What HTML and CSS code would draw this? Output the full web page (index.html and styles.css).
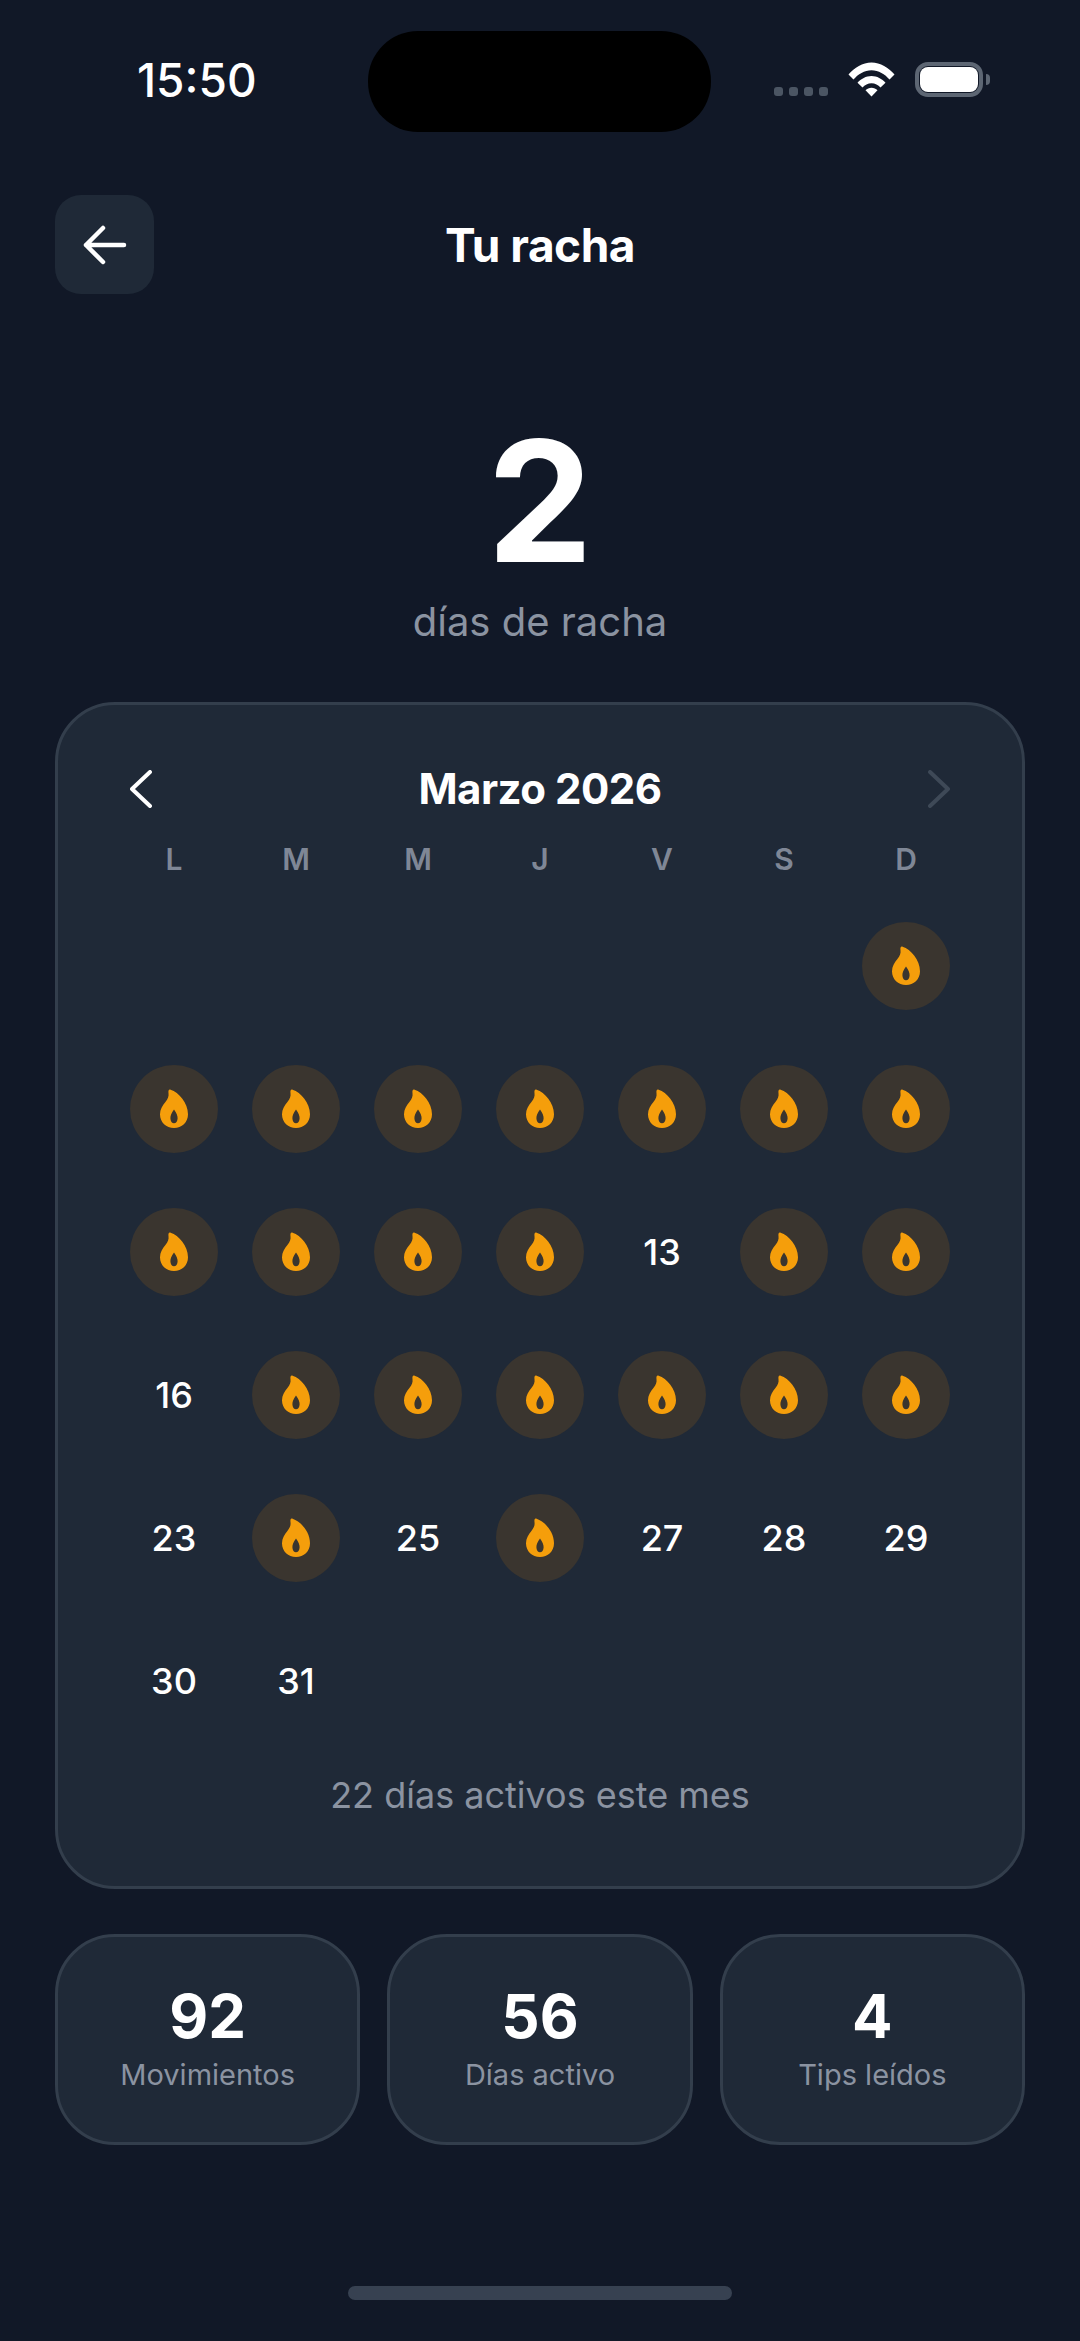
FILE: index.html
```html
<!DOCTYPE html>
<html lang="es">
<head>
  <meta charset="UTF-8" />
  <meta name="viewport" content="width=device-width, initial-scale=1.0"/>
  <title>Tu racha</title>
  <link rel="stylesheet" href="styles.css">
</head>
<body>
  <svg class="defs" width="0" height="0">
    <symbol id="llama" viewBox="0 0 28 39">
      <path fill-rule="evenodd" d="M9.6 0.6C8.4 1 8.3 2.4 8.5 4.2C8.9 7.4 8 9.6 5.4 13C2.4 16.8 0 20.4 0 25.2C0 33.2 6.2 39 14 39C21.800 39 28 33.200 28 25.200C28 13.800 18.800 3.400 10.600 0.700C10.300 0.600 9.900 0.500 9.600 0.600ZM14 20.400C11.400 24 10.400 26.600 10.400 29.200C10.400 32.200 12 34.200 14 34.200C16 34.200 17.600 32.200 17.600 29.200C17.600 26.600 16.600 24 14 20.400Z"/>
    </symbol>
  </svg>

  <div class="status-bar">
    <span class="hora">15:50</span>
    <div class="isla"></div>
    <div class="status-iconos">
      <div class="senal"><i></i><i></i><i></i><i></i></div>
      <svg class="wifi" width="47" height="35" viewBox="0 0 47 35">
        <path d="M0.500 12.500C6.500 5.500 14.500 0.500 23.500 0.500C32.500 0.500 40.500 5.500 46.500 12.500L41.500 17.500C37 12.200 30.500 8.200 23.500 8.200C16.500 8.200 10 12.200 5.500 17.500Z"/>
        <path d="M9.500 20.800C13 16.800 18 14 23.500 14C29 14 34 16.800 37.500 20.800L32.500 25.500C30.300 22.900 27 21.200 23.500 21.200C20 21.200 16.700 22.900 14.500 25.500Z"/>
        <path d="M17.500 28.200C19 26.800 21.200 25.800 23.500 25.800C25.800 25.800 28 26.800 29.500 28.200L23.500 34.500Z"/>
      </svg>
      <div class="bateria"><div class="carga"></div></div>
      <div class="bateria-punta"></div>
    </div>
  </div>

  <header class="cabecera">
    <button class="volver" aria-label="Volver">
      <svg width="44" height="40" viewBox="0 0 44 40" fill="none" stroke="#fff" stroke-width="4.500" stroke-linecap="round" stroke-linejoin="round">
        <path d="M41 20H3M20 3L3 20L20 37"/>
      </svg>
    </button>
    <h1>Tu racha</h1>
  </header>

  <section class="racha">
    <div class="racha-numero">2</div>
    <div class="racha-texto">días de racha</div>
  </section>

  <section class="calendario">
    <div class="mes">
      <svg width="22" height="38" viewBox="0 0 22 38" fill="none" stroke="#fff" stroke-width="4" stroke-linecap="round" stroke-linejoin="round">
        <path d="M20 2L2 19L20 36"/>
      </svg>
      <h2>Marzo 2026</h2>
      <svg width="22" height="38" viewBox="0 0 22 38" fill="none" stroke="#3e4957" stroke-width="4" stroke-linecap="round" stroke-linejoin="round">
        <path d="M2 2L20 19L2 36"/>
      </svg>
    </div>

    <div class="semana">
      <span>L</span><span>M</span><span>M</span><span>J</span><span>V</span><span>S</span><span>D</span>
    </div>

    <div class="dias">
      <div></div><div></div><div></div><div></div><div></div><div></div>
      <div class="dia"><span class="activo"><svg class="llama"><use href="#llama"/></svg></span></div>

      <div class="dia"><span class="activo"><svg class="llama"><use href="#llama"/></svg></span></div>
      <div class="dia"><span class="activo"><svg class="llama"><use href="#llama"/></svg></span></div>
      <div class="dia"><span class="activo"><svg class="llama"><use href="#llama"/></svg></span></div>
      <div class="dia"><span class="activo"><svg class="llama"><use href="#llama"/></svg></span></div>
      <div class="dia"><span class="activo"><svg class="llama"><use href="#llama"/></svg></span></div>
      <div class="dia"><span class="activo"><svg class="llama"><use href="#llama"/></svg></span></div>
      <div class="dia"><span class="activo"><svg class="llama"><use href="#llama"/></svg></span></div>

      <div class="dia"><span class="activo"><svg class="llama"><use href="#llama"/></svg></span></div>
      <div class="dia"><span class="activo"><svg class="llama"><use href="#llama"/></svg></span></div>
      <div class="dia"><span class="activo"><svg class="llama"><use href="#llama"/></svg></span></div>
      <div class="dia"><span class="activo"><svg class="llama"><use href="#llama"/></svg></span></div>
      <div class="dia">13</div>
      <div class="dia"><span class="activo"><svg class="llama"><use href="#llama"/></svg></span></div>
      <div class="dia"><span class="activo"><svg class="llama"><use href="#llama"/></svg></span></div>

      <div class="dia">16</div>
      <div class="dia"><span class="activo"><svg class="llama"><use href="#llama"/></svg></span></div>
      <div class="dia"><span class="activo"><svg class="llama"><use href="#llama"/></svg></span></div>
      <div class="dia"><span class="activo"><svg class="llama"><use href="#llama"/></svg></span></div>
      <div class="dia"><span class="activo"><svg class="llama"><use href="#llama"/></svg></span></div>
      <div class="dia"><span class="activo"><svg class="llama"><use href="#llama"/></svg></span></div>
      <div class="dia"><span class="activo"><svg class="llama"><use href="#llama"/></svg></span></div>

      <div class="dia">23</div>
      <div class="dia"><span class="activo"><svg class="llama"><use href="#llama"/></svg></span></div>
      <div class="dia">25</div>
      <div class="dia"><span class="activo"><svg class="llama"><use href="#llama"/></svg></span></div>
      <div class="dia">27</div>
      <div class="dia">28</div>
      <div class="dia">29</div>

      <div class="dia">30</div>
      <div class="dia">31</div>
    </div>

    <p class="resumen">22 días activos este mes</p>
  </section>

  <section class="stats">
    <div class="stat"><strong>92</strong><span>Movimientos</span></div>
    <div class="stat"><strong>56</strong><span>Días activo</span></div>
    <div class="stat"><strong>4</strong><span>Tips leídos</span></div>
  </section>

  <div class="home-bar"></div>
</body>
</html>
```

FILE: styles.css
```css
* {
  box-sizing: border-box;
}
body {
  margin: 0;
  width: 1080px;
  height: 2341px;
  overflow: hidden;
  background: #111827;
  color: #fff;
  font-family: Inter, "Noto Sans", sans-serif;
  display: flex;
  flex-direction: column;
  align-items: center;
}
.defs {
  position: absolute;
}

/* barra de estado */
.status-bar {
  width: 100%;
  height: 195px;
  padding: 31px 90px 0 137px;
  display: flex;
  align-items: flex-start;
}
.hora {
  width: 231px;
  margin-top: 24px;
  font-size: 46px;
  line-height: 50px;
  font-weight: 500;
}
.isla {
  width: 344px;
  height: 101px;
  background: #000;
  border-radius: 50px;
}
.status-iconos {
  margin-top: 31px;
  margin-left: 63px;
  display: flex;
  align-items: flex-end;
}
.senal {
  display: flex;
  gap: 6px;
  margin-right: 20px;
  margin-bottom: 1px;
}
.senal i {
  width: 9px;
  height: 9px;
  border-radius: 3px;
  background: #4b5563;
}
.wifi {
  fill: #fff;
  margin-right: 20px;
}
.bateria {
  width: 68px;
  height: 35px;
  border: 4px solid #5d6673;
  border-radius: 13px;
  padding: 1px;
}
.carga {
  height: 100%;
  background: #fff;
  border-radius: 8px;
}
.bateria-punta {
  width: 4px;
  height: 11px;
  margin: 0 0 12px 3px;
  background: #5d6673;
  border-radius: 0 4px 4px 0;
}

/* cabecera */
.cabecera {
  width: 100%;
  height: 99px;
  padding: 0 55px;
  display: flex;
  align-items: center;
  position: relative;
}
.volver {
  width: 99px;
  height: 99px;
  background: #1f2937;
  border: none;
  border-radius: 26px;
  display: flex;
  align-items: center;
  justify-content: center;
  padding: 0;
}
.cabecera h1 {
  flex: 1;
  margin: 0 99px 0 0;
  text-align: center;
  font-size: 46px;
  line-height: 56px;
  font-weight: 700;
  letter-spacing: -0.5px;
}

/* racha */
.racha {
  margin-top: 112px;
  text-align: center;
}
.racha-numero {
  font-size: 168px;
  line-height: 190px;
  font-weight: 700;
}
.racha-texto {
  margin-top: 1px;
  font-size: 40px;
  line-height: 50px;
  color: #8b93a1;
}

/* calendario */
.calendario {
  width: 970px;
  height: 1187px;
  margin-top: 55px;
  padding: 0 55px;
  background: #1f2937;
  border: 3px solid #333e4c;
  border-radius: 60px;
}
.mes {
  height: 60px;
  margin-top: 54px;
  padding: 0 17px;
  display: flex;
  align-items: center;
  justify-content: space-between;
}
.mes h2 {
  margin: 0;
  font-size: 42px;
  line-height: 60px;
  font-weight: 700;
  letter-spacing: -0.5px;
}
.semana {
  display: grid;
  grid-template-columns: repeat(7, 122px);
  margin-top: 20px;
  font-size: 30px;
  line-height: 40px;
  font-weight: 600;
  color: #7f8796;
  text-align: center;
}
.dias {
  display: grid;
  grid-template-columns: repeat(7, 122px);
  grid-auto-rows: 143px;
  margin-top: 15px;
}
.dia {
  display: flex;
  align-items: center;
  justify-content: center;
  font-size: 36px;
  font-weight: 500;
}
.activo {
  width: 88px;
  height: 88px;
  border-radius: 50%;
  background: #3a352f;
  display: flex;
  align-items: center;
  justify-content: center;
}
.llama {
  width: 28px;
  height: 39px;
  fill: #f59e0b;
}
.resumen {
  margin: 0;
  padding-top: 21px;
  text-align: center;
  font-size: 36px;
  line-height: 44px;
  color: #8b93a1;
}

/* tarjetas de abajo */
.stats {
  width: 970px;
  margin-top: 45px;
  display: grid;
  grid-template-columns: repeat(3, 1fr);
  gap: 27px;
}
.stat {
  height: 211px;
  background: #1f2937;
  border: 3px solid #333e4c;
  border-radius: 60px;
  display: flex;
  flex-direction: column;
  align-items: center;
  padding-top: 44px;
}
.stat strong {
  font-size: 60px;
  line-height: 70px;
  font-weight: 700;
}
.stat span {
  margin-top: 6px;
  font-size: 29px;
  line-height: 36px;
  color: #8b93a1;
}

.home-bar {
  width: 384px;
  height: 14px;
  margin-top: 141px;
  background: #374151;
  border-radius: 7px;
}
```
